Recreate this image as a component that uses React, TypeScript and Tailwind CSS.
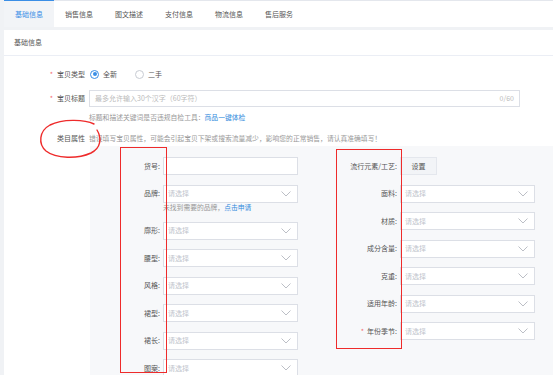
import React from 'react';

const tabs = ['基础信息', '销售信息', '图文描述', '支付信息', '物流信息', '售后服务'];

const leftFields = ['货号', '品牌', '廓形', '腰型', '风格', '裙型', '裙长', '图案'];
const rightFields = ['流行元素/工艺', '面料', '材质', '成分含量', '克重', '适用年龄', '年份季节'];

const Chevron = () => (
  <svg width="10" height="6" viewBox="0 0 10 6" className="shrink-0">
    <path d="M0.5 0.5 L5 5 L9.5 0.5" fill="none" stroke="#b4b8bf" strokeWidth="0.9" />
  </svg>
);

const SelectBox = () => (
  <div className="w-[135px] h-[18px] bg-white border border-[#dcdfe6] flex items-center justify-between pl-[4px] pr-[6px]">
    <span className="text-[#c0c4cc]">请选择</span>
    <Chevron />
  </div>
);

const FieldLabel: React.FC<{ text: string; width: string; required?: boolean }> = ({ text, width, required }) => (
  <div className={`${width} shrink-0 text-right pr-[3px] text-[#555]`}>
    {required && <span className="text-[#f56c6c] mr-[3px]">*</span>}
    {text}:
  </div>
);

const App: React.FC = () => {
  return (
    <div
      className="relative w-[553px] h-[375px] overflow-hidden bg-[#f0f2f5] text-[7px] text-[#555]"
      style={{ fontFamily: '"Noto Sans CJK SC", "Noto Sans", sans-serif' }}
    >
      <div className="ml-[4px] bg-white">
        {/* tabs */}
        <div className="h-[27px] flex border-t border-[#e4e7ed]">
          {tabs.map((t, i) => (
            <div
              key={t}
              className={`w-[50px] flex items-center justify-center ${
                i === 0 ? 'bg-[#f2f4f7] text-[#3a8ee6] border-t border-[#3a8ee6] -mt-px' : 'text-[#555]'
              }`}
            >
              {t}
            </div>
          ))}
        </div>
      </div>
      <div className="ml-[4px] mt-[3px] bg-white h-[345px]">
        <div className="h-[26px] flex items-center pl-[10px] border-b border-[#ebeef5] text-[#555]">基础信息</div>

        {/* 宝贝类型 */}
        <div className="flex items-center mt-[10px] h-[16px]">
          <div className="w-[81px] text-right">
            <span className="text-[#f56c6c] mr-[4px]">*</span>宝贝类型
          </div>
          <div className="ml-[5px] flex items-center">
            <span className="w-[9px] h-[9px] rounded-full border border-[#3a8ee6] flex items-center justify-center">
              <span className="w-[4px] h-[4px] rounded-full bg-[#3a8ee6]" />
            </span>
            <span className="ml-[4px]">全新</span>
            <span className="ml-[18px] w-[9px] h-[9px] rounded-full border border-[#c8ccd3]" />
            <span className="ml-[4px]">二手</span>
          </div>
        </div>

        {/* 宝贝标题 */}
        <div className="flex items-center mt-[8px]">
          <div className="w-[81px] text-right">
            <span className="text-[#f56c6c] mr-[4px]">*</span>宝贝标题
          </div>
          <div className="ml-[4px] w-[431px] h-[17px] border border-[#dcdfe6] flex items-center justify-between px-[5px]">
            <span className="text-[#bbb]">最多允许输入30个汉字（60字符）</span>
            <span className="text-[#bbb]">0/60</span>
          </div>
        </div>
        <div className="ml-[85px] mt-[5px] h-[10px] flex items-center text-[6.8px] text-[#999]">
          标题和描述关键词是否违规自检工具：<span className="text-[#3089dc]">商品一键体检</span>
        </div>

        {/* 类目属性 */}
        <div className="flex items-center mt-[10px] h-[12px]">
          <div className="w-[81px] text-right">类目属性</div>
          <div className="ml-[4px] text-[6.8px] text-[#999]">
            错误填写宝贝属性，可能会引起宝贝下架或搜索流量减少，影响您的正常销售，请认真准确填写！
          </div>
        </div>

        {/* attributes panel */}
        <div className="ml-[86px] mt-[2px] bg-[#f7f8fa] h-[240px] pt-[11px] flex">
          <div className="flex flex-col gap-[9.5px]">
            {leftFields.map((f) => (
              <div key={f}>
                <div className="flex items-center h-[18px]">
                  <FieldLabel text={f} width="w-[73px]" />
                  {f === '货号' ? (
                    <div className="w-[135px] h-[18px] bg-white border border-[#dcdfe6]" />
                  ) : (
                    <SelectBox />
                  )}
                </div>
                {f === '品牌' && (
                  <div className="ml-[73px] h-[9.5px] flex items-center text-[6.8px] text-[#999]">
                    未找到需要的品牌，<span className="text-[#3089dc]">点击申请</span>
                  </div>
                )}
              </div>
            ))}
          </div>
          <div className="flex flex-col gap-[9.5px] ml-[2px]">
            {rightFields.map((f, i) => (
              <div key={f} className="flex items-center h-[18px]">
                <FieldLabel text={f} width="w-[100px]" required={i === rightFields.length - 1} />
                {i === 0 ? (
                  <div className="w-[37px] h-[18px] bg-[#f2f4f7] border border-[#e4e7ed] flex items-center justify-center text-[#555]">
                    设置
                  </div>
                ) : (
                  <SelectBox />
                )}
              </div>
            ))}
          </div>
        </div>
      </div>

      {/* annotations */}
      <div className="absolute left-[120px] top-[147px] w-[47px] h-[226px] border-[1.5px] border-[#ee2b2b]" />
      <div className="absolute left-[336px] top-[149px] w-[66px] h-[200px] border-[1.5px] border-[#ee2b2b]" />
      <svg className="absolute left-[36px] top-[118px]" width="70" height="42" viewBox="0 0 70 42">
        <path
          d="M58 6 C48 1 26 1 14 7 C3 13 2 26 10 33 C20 41 42 41 55 35 C65 30 66 20 61 12"
          fill="none"
          stroke="#ee2b2b"
          strokeWidth="1.4"
          strokeLinecap="round"
        />
      </svg>
    </div>
  );
};

export default App;
